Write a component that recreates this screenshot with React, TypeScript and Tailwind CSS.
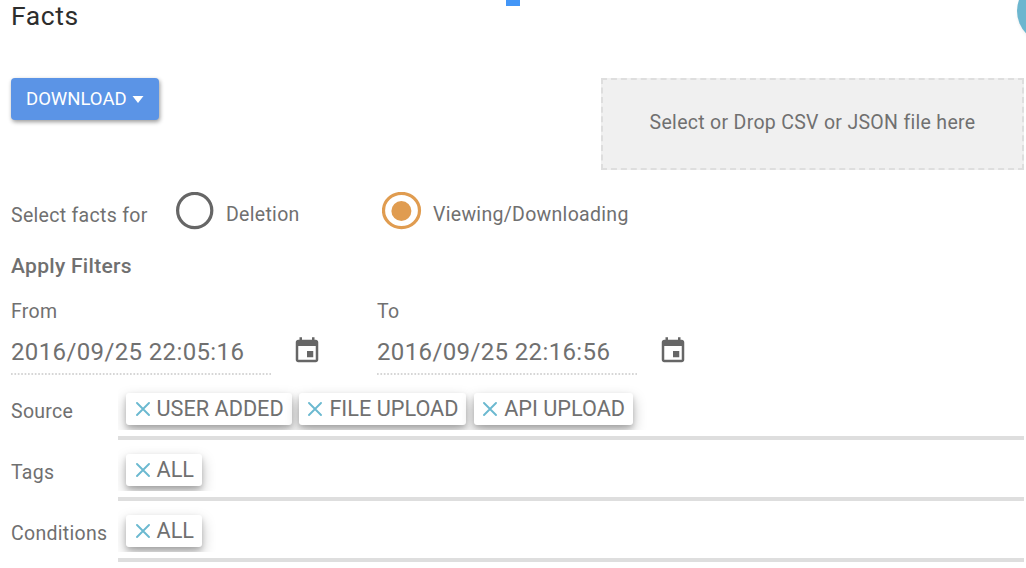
type Filter = { label: string; tags: string[] };

const filters: Filter[] = [
  { label: "Source", tags: ["USER ADDED", "FILE UPLOAD", "API UPLOAD"] },
  { label: "Tags", tags: ["ALL"] },
  { label: "Conditions", tags: ["ALL"] },
];

function CalendarIcon() {
  return (
    <svg className="mt-[1.5px] ml-[20.5px] h-[30px] w-[30px]" viewBox="0 0 24 24" fill="#666">
      <path d="M17 12h-5v5h5v-5zM16 1v2H8V1H6v2H5c-1.11 0-1.99.9-1.99 2L3 19c0 1.1.89 2 2 2h14c1.1 0 2-.9 2-2V5c0-1.1-.9-2-2-2h-1V1h-2zm3 18H5V8h14v11z" />
    </svg>
  );
}

function DateField({ label, value }: { label: string; value: string }) {
  return (
    <div className="w-[366px]">
      <div className="h-[36px] pt-px text-[19.5px] leading-[26px] tracking-[0.3px]">{label}</div>
      <div className="flex h-[40px]">
        <div className="flex h-[41px] w-[260px] flex-col">
          <span className="h-[39px] text-[24px] leading-[36px] tracking-[0.37px] whitespace-nowrap">{value}</span>
          <svg className="block h-[2px] w-[260px]">
            <line x1="0" y1="1" x2="260" y2="1" stroke="#c9c9c9" strokeWidth="1.5" strokeDasharray="1.7 1.7" />
          </svg>
        </div>
        <CalendarIcon />
      </div>
    </div>
  );
}

function Tag({ text }: { text: string }) {
  return (
    <span className="flex h-[32px] items-center rounded-[3px] bg-white pr-[8px] pl-[9.5px] text-[21.7px] leading-[32px] whitespace-nowrap shadow-[0_6px_14px_rgba(0,0,0,0.28),0_3px_5px_rgba(0,0,0,0.16)]">
      <svg className="mr-[7px] h-[14px] w-[14px] shrink-0" viewBox="0 0 14 14" stroke="#6bb9d0" strokeWidth="1.9" strokeLinecap="round">
        <path d="M1 1 13 13M13 1 1 13" />
      </svg>
      {text}
    </span>
  );
}

function FilterRow({ label, tags }: Filter) {
  return (
    <div className="flex h-[61px]">
      <div className="w-[107px] pt-[14px] text-[19.5px] leading-[26px] tracking-[0.3px]">{label}</div>
      <div className="h-[55px] flex-1 border-b-[4px] border-[#dedede]">
        <div className="flex h-[45px] gap-[7.2px] overflow-hidden pt-[8px] pl-[8px]">
          {tags.map((tag) => (
            <Tag key={tag} text={tag} />
          ))}
        </div>
      </div>
    </div>
  );
}

export default function App() {
  return (
    <main className="relative h-[568px] w-[1026px] overflow-hidden bg-white pl-[11px] font-['Roboto',sans-serif] text-[#707070]">
      <div className="absolute top-0 left-[506px] h-[6px] w-[14px] bg-[#4396f7]" />
      <div className="absolute top-[-21px] left-[1017px] h-[64px] w-[64px] rounded-full bg-[#6cb6cf] shadow-[0_2px_3px_rgba(0,0,0,0.06)]" />

      <h1 className="h-[78px] text-[26.5px] leading-[32px] tracking-[0.6px] text-[#2d2d2d]">Facts</h1>

      <div className="flex h-[114px] justify-between pr-[2px]">
        <button className="flex h-[42px] w-[148px] items-center rounded-[4px] bg-[#5b94e6] pt-px pl-[15px] text-[18.5px] text-white shadow-[1px_2px_4px_rgba(0,0,0,0.4)]">
          DOWNLOAD
          <svg className="ml-[5px] h-[7px] w-[12px]" viewBox="0 0 12 7" fill="white">
            <path d="M0.5 0H11.5L6 7Z" />
          </svg>
        </button>
        <div className="flex h-[92px] w-[423px] items-center justify-center border-2 border-dashed border-[#dedede] bg-[#f0f0f0] pb-[3px] text-[19.5px] tracking-[0.3px]">
          Select or Drop CSV or JSON file here
        </div>
      </div>

      <div className="flex h-[60px] text-[19.5px] leading-[26px] tracking-[0.3px]">
        <span className="w-[165px] pt-[11px]">Select facts for</span>
        <label className="flex w-[206px]">
          <svg className="mr-[12px] h-[38px] w-[38px]" viewBox="0 0 38 38" fill="none">
            <circle cx="18.7" cy="18.5" r="17.1" stroke="#666" strokeWidth="3.2" />
          </svg>
          <span className="pt-[10px]">Deletion</span>
        </label>
        <label className="flex">
          <svg className="mr-[11px] h-[38px] w-[40px]" viewBox="0 0 40 38">
            <ellipse cx="19.5" cy="18.5" rx="18" ry="17.1" fill="none" stroke="#e09c50" strokeWidth="3.2" />
            <circle cx="19.4" cy="19" r="10" fill="#e09c50" />
          </svg>
          <span className="pt-[10px]">Viewing/Downloading</span>
        </label>
      </div>

      <h2 className="h-[46px] text-[21px] leading-[28px] font-medium tracking-[0.3px]">Apply Filters</h2>

      <div className="flex h-[87px]">
        <DateField label="From" value="2016/09/25 22:05:16" />
        <DateField label="To" value="2016/09/25 22:16:56" />
      </div>

      <div className="pr-[2px]">
        {filters.map((filter) => (
          <FilterRow key={filter.label} {...filter} />
        ))}
      </div>
    </main>
  );
}
